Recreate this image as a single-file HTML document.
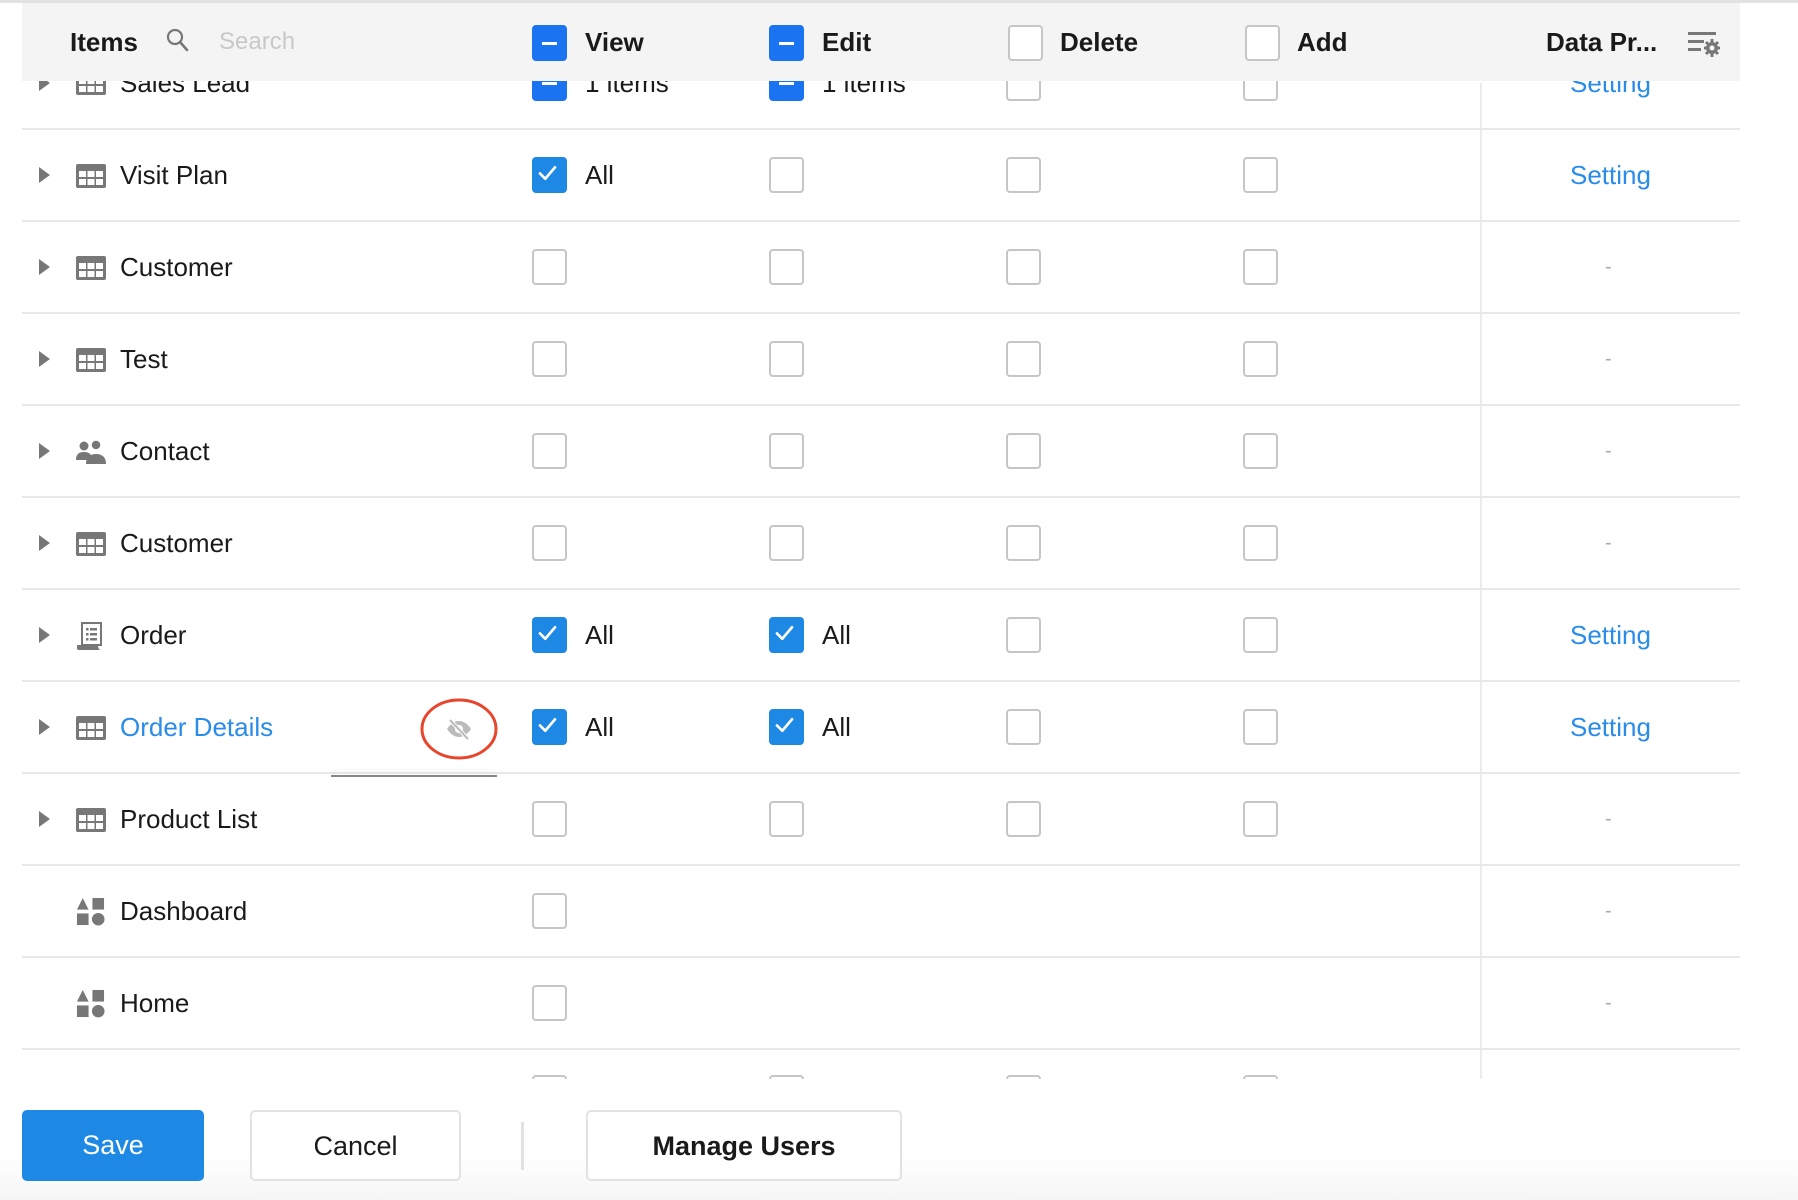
<!DOCTYPE html>
<html><head><meta charset="utf-8"><style>
*{margin:0;padding:0;box-sizing:border-box}
body{width:1798px;height:1200px;background:#fff;font-family:"Liberation Sans",Arial,sans-serif;position:relative;overflow:hidden;color:#1a1a1a}
.abs{position:absolute}
#topline{left:0;top:0;width:1798px;height:3px;background:#e2e2e2}
#scroll{left:0;top:0;width:1798px;height:1079px;overflow:hidden}
#inner{position:absolute;left:0;top:2px;width:1798px;height:1200px}
.line{position:absolute;left:22px;width:1718px;height:2px;background:#e8e8e8}
.vdiv{position:absolute;left:1480px;width:2px;background:#ebebeb;top:81px;height:998px}
.cb{position:absolute;width:35px;height:36px;border:2px solid #c6c6c6;border-radius:4px;background:#fff}
.cb.on{background:#1e88e5;border-color:#1e88e5}
.cb.ind{background:#1a73f0;border-color:#1a73f0}
.cb.ind::after{content:"";position:absolute;left:8px;top:15px;width:15px;height:3px;background:#fff}
.t{position:absolute;font-size:26px;line-height:30px;white-space:nowrap}
.tri{position:absolute;width:0;height:0;border-top:8px solid transparent;border-bottom:8px solid transparent;border-left:11px solid #777}
.set{position:absolute;font-size:26px;color:#2a8cea;line-height:30px}
.dash{position:absolute;font-size:20px;color:#aaa;line-height:30px}
#header{left:22px;top:3px;width:1718px;height:78px;background:#f4f4f4}
.h{position:absolute;font-size:26px;font-weight:bold;line-height:30px;color:#1a1a1a;white-space:nowrap}
.btn{position:absolute;border-radius:5px;font-size:27px;text-align:center;line-height:69px}
</style></head><body>
<div id="scroll" class="abs"><div id="inner">
<div class="vdiv"></div>
<div class="line" style="top:126px"></div>
<div class="line" style="top:218px"></div>
<div class="line" style="top:310px"></div>
<div class="line" style="top:402px"></div>
<div class="line" style="top:494px"></div>
<div class="line" style="top:586px"></div>
<div class="line" style="top:678px"></div>
<div class="line" style="top:770px"></div>
<div class="line" style="top:862px"></div>
<div class="line" style="top:954px"></div>
<div class="line" style="top:1046px"></div>

<svg width="0" height="0" style="position:absolute"><defs>
<symbol id="grid" viewBox="0 0 30 24"><rect x="0" y="0" width="30" height="24" rx="2" fill="#777"/><g fill="#fff"><rect x="3" y="7" width="7" height="6"/><rect x="11.5" y="7" width="7" height="6"/><rect x="20" y="7" width="7" height="6"/><rect x="3" y="15" width="7" height="6"/><rect x="11.5" y="15" width="7" height="6"/><rect x="20" y="15" width="7" height="6"/></g></symbol>
<symbol id="chk" viewBox="0 0 35 36"><path d="M9 18.5l6 6 11-13" stroke="#fff" stroke-width="3" fill="none" stroke-linecap="round" stroke-linejoin="round"/></symbol>
<symbol id="shapes" viewBox="0 0 30 30"><path d="M1 13L7 1L13 13Z" fill="#777"/><rect x="17" y="1" width="12" height="12" fill="#777"/><rect x="1" y="17" width="12" height="12" fill="#777"/><circle cx="23" cy="23" r="6.5" fill="#777"/></symbol>
</defs></svg>

<div class="tri" style="left:39px;top:73px"></div>
<svg class="abs" style="left:76px;top:69px" width="30" height="24"><use href="#grid"/></svg>
<div class="t" style="left:120px;top:66px">Sales Lead</div>
<div class="cb ind" style="left:532px;top:63px"></div><div class="t" style="left:585px;top:66px">1 items</div>
<div class="cb ind" style="left:769px;top:63px"></div><div class="t" style="left:822px;top:66px">1 items</div>
<div class="cb" style="left:1006px;top:63px"></div><div class="cb" style="left:1243px;top:63px"></div>
<div class="set" style="left:1570px;top:66px">Setting</div>

<div class="tri" style="left:39px;top:165px"></div>
<svg class="abs" style="left:76px;top:162px" width="30" height="24"><use href="#grid"/></svg>
<div class="t" style="left:120px;top:158px">Visit Plan</div>
<div class="cb on" style="left:532px;top:155px"><svg width="31" height="32" viewBox="2 2 31 32"><use href="#chk"/></svg></div><div class="t" style="left:585px;top:158px">All</div>
<div class="cb" style="left:769px;top:155px"></div><div class="cb" style="left:1006px;top:155px"></div><div class="cb" style="left:1243px;top:155px"></div>
<div class="set" style="left:1570px;top:158px">Setting</div>

<div class="tri" style="left:39px;top:257px"></div>
<svg class="abs" style="left:76px;top:254px" width="30" height="24"><use href="#grid"/></svg>
<div class="t" style="left:120px;top:250px">Customer</div>
<div class="cb" style="left:532px;top:247px"></div><div class="cb" style="left:769px;top:247px"></div><div class="cb" style="left:1006px;top:247px"></div><div class="cb" style="left:1243px;top:247px"></div>
<div class="dash" style="left:1605px;top:250px">-</div>

<div class="tri" style="left:39px;top:349px"></div>
<svg class="abs" style="left:76px;top:346px" width="30" height="24"><use href="#grid"/></svg>
<div class="t" style="left:120px;top:342px">Test</div>
<div class="cb" style="left:532px;top:339px"></div><div class="cb" style="left:769px;top:339px"></div><div class="cb" style="left:1006px;top:339px"></div><div class="cb" style="left:1243px;top:339px"></div>
<div class="dash" style="left:1605px;top:342px">-</div>

<div class="tri" style="left:39px;top:441px"></div>
<svg class="abs" style="left:75px;top:437px" width="32" height="26" viewBox="0 0 32 26"><g fill="#777"><circle cx="9" cy="7" r="4.5"/><path d="M1 21c0-6 3-8 8-8s8 2 8 8z"/><circle cx="21" cy="6" r="5"/><path d="M11 25c0-7 4-10 10-10s10 3 10 10z"/></g><circle cx="21" cy="6" r="5" fill="none" stroke="#fff" stroke-width="1.5"/></svg>
<div class="t" style="left:120px;top:434px">Contact</div>
<div class="cb" style="left:532px;top:431px"></div><div class="cb" style="left:769px;top:431px"></div><div class="cb" style="left:1006px;top:431px"></div><div class="cb" style="left:1243px;top:431px"></div>
<div class="dash" style="left:1605px;top:434px">-</div>

<div class="tri" style="left:39px;top:533px"></div>
<svg class="abs" style="left:76px;top:530px" width="30" height="24"><use href="#grid"/></svg>
<div class="t" style="left:120px;top:526px">Customer</div>
<div class="cb" style="left:532px;top:523px"></div><div class="cb" style="left:769px;top:523px"></div><div class="cb" style="left:1006px;top:523px"></div><div class="cb" style="left:1243px;top:523px"></div>
<div class="dash" style="left:1605px;top:526px">-</div>

<div class="tri" style="left:39px;top:625px"></div>
<svg class="abs" style="left:76px;top:619px" width="28" height="30" viewBox="0 0 28 30"><rect x="6" y="2" width="19" height="22" fill="none" stroke="#777" stroke-width="2"/><path d="M1 24v3c0 2 1 2 3 2h21c-2 0-3-2-3-5z" fill="#777"/><g fill="#777"><rect x="10" y="7" width="2.5" height="2.5"/><rect x="14" y="7" width="7" height="2.5"/><rect x="10" y="12" width="2.5" height="2.5"/><rect x="14" y="12" width="7" height="2.5"/><rect x="10" y="17" width="2.5" height="2.5"/><rect x="14" y="17" width="7" height="2.5"/></g></svg>
<div class="t" style="left:120px;top:618px">Order</div>
<div class="cb on" style="left:532px;top:615px"><svg width="31" height="32" viewBox="2 2 31 32"><use href="#chk"/></svg></div><div class="t" style="left:585px;top:618px">All</div>
<div class="cb on" style="left:769px;top:615px"><svg width="31" height="32" viewBox="2 2 31 32"><use href="#chk"/></svg></div><div class="t" style="left:822px;top:618px">All</div>
<div class="cb" style="left:1006px;top:615px"></div><div class="cb" style="left:1243px;top:615px"></div>
<div class="set" style="left:1570px;top:618px">Setting</div>

<div class="tri" style="left:39px;top:717px"></div>
<svg class="abs" style="left:76px;top:714px" width="30" height="24"><use href="#grid"/></svg>
<div class="t" style="left:120px;top:710px;color:#2a8cea">Order Details</div>
<div class="abs" style="left:331px;top:773px;width:166px;height:2px;background:#888;box-shadow:0 -3px 8px rgba(0,0,0,0.08)"></div>
<svg class="abs" style="left:419px;top:694px" width="80" height="66" viewBox="0 0 80 66"><ellipse cx="40" cy="33" rx="37" ry="29" fill="none" stroke="#e8452c" stroke-width="3"/><path d="M28 33c4-6 8-8 12-8s8 2 12 8c-4 6-8 8-12 8s-8-2-12-8z" fill="#bbb"/><circle cx="40" cy="33" r="4" fill="#fff"/><path d="M31 24l18 19" stroke="#fff" stroke-width="4"/><path d="M31 24l18 19" stroke="#bbb" stroke-width="2"/></svg>
<div class="cb on" style="left:532px;top:707px"><svg width="31" height="32" viewBox="2 2 31 32"><use href="#chk"/></svg></div><div class="t" style="left:585px;top:710px">All</div>
<div class="cb on" style="left:769px;top:707px"><svg width="31" height="32" viewBox="2 2 31 32"><use href="#chk"/></svg></div><div class="t" style="left:822px;top:710px">All</div>
<div class="cb" style="left:1006px;top:707px"></div><div class="cb" style="left:1243px;top:707px"></div>
<div class="set" style="left:1570px;top:710px">Setting</div>

<div class="tri" style="left:39px;top:809px"></div>
<svg class="abs" style="left:76px;top:806px" width="30" height="24"><use href="#grid"/></svg>
<div class="t" style="left:120px;top:802px">Product List</div>
<div class="cb" style="left:532px;top:799px"></div><div class="cb" style="left:769px;top:799px"></div><div class="cb" style="left:1006px;top:799px"></div><div class="cb" style="left:1243px;top:799px"></div>
<div class="dash" style="left:1605px;top:802px">-</div>

<svg class="abs" style="left:76px;top:895px" width="29" height="29"><use href="#shapes"/></svg>
<div class="t" style="left:120px;top:894px">Dashboard</div>
<div class="cb" style="left:532px;top:891px"></div>
<div class="dash" style="left:1605px;top:894px">-</div>

<svg class="abs" style="left:76px;top:987px" width="29" height="29"><use href="#shapes"/></svg>
<div class="t" style="left:120px;top:986px">Home</div>
<div class="cb" style="left:532px;top:983px"></div>
<div class="dash" style="left:1605px;top:986px">-</div>

<div class="cb" style="left:532px;top:1073px"></div><div class="cb" style="left:769px;top:1073px"></div><div class="cb" style="left:1006px;top:1073px"></div><div class="cb" style="left:1243px;top:1073px"></div>
</div></div>

<div id="topline" class="abs"></div>
<div id="header" class="abs">
<div class="h" style="left:48px;top:24px">Items</div>
<svg class="abs" style="left:144px;top:25px" width="24" height="26" viewBox="0 0 24 26"><circle cx="9" cy="9" r="7" fill="none" stroke="#777" stroke-width="2.2"/><path d="M14 14l7 8" stroke="#777" stroke-width="2.6" stroke-linecap="round"/></svg>
<div class="abs" style="left:197px;top:24px;font-size:24px;line-height:30px;color:#c8c8c8">Search</div>
<div class="cb ind" style="left:510px;top:22px"></div><div class="h" style="left:563px;top:24px">View</div>
<div class="cb ind" style="left:747px;top:22px"></div><div class="h" style="left:800px;top:24px">Edit</div>
<div class="cb" style="left:986px;top:22px"></div><div class="h" style="left:1038px;top:24px">Delete</div>
<div class="cb" style="left:1223px;top:22px"></div><div class="h" style="left:1275px;top:24px">Add</div>
<div class="h" style="left:1524px;top:24px">Data Pr...</div>
<svg class="abs" style="left:1666px;top:27px" width="34" height="28" viewBox="0 0 34 28"><g fill="#777"><rect x="0" y="2" width="28" height="3"/><rect x="0" y="10" width="16" height="3"/><rect x="0" y="18" width="13" height="3"/><circle cx="24" cy="18" r="6"/><g stroke="#777" stroke-width="3"><path d="M24 9v18M16 18h16M18 12l12 12M30 12l-12 12"/></g></g><circle cx="24" cy="18" r="2.5" fill="#f4f4f4"/></svg>
</div>

<div class="abs" style="left:0;top:1079px;width:1798px;height:121px;background:linear-gradient(#fff 0,#fff 60%,#f6f6f6 100%)"></div>
<div class="btn" style="left:22px;top:1110px;width:182px;height:71px;background:#1e88e5;color:#fff;line-height:71px">Save</div>
<div class="btn" style="left:250px;top:1110px;width:211px;height:71px;border:2px solid #e2e2e2;background:#fff;color:#1a1a1a">Cancel</div>
<div class="abs" style="left:521px;top:1122px;width:3px;height:48px;background:#e2e2e2"></div>
<div class="btn" style="left:586px;top:1110px;width:316px;height:71px;border:2px solid #e2e2e2;background:#fff;color:#1a1a1a;font-weight:bold">Manage Users</div>
</body></html>
